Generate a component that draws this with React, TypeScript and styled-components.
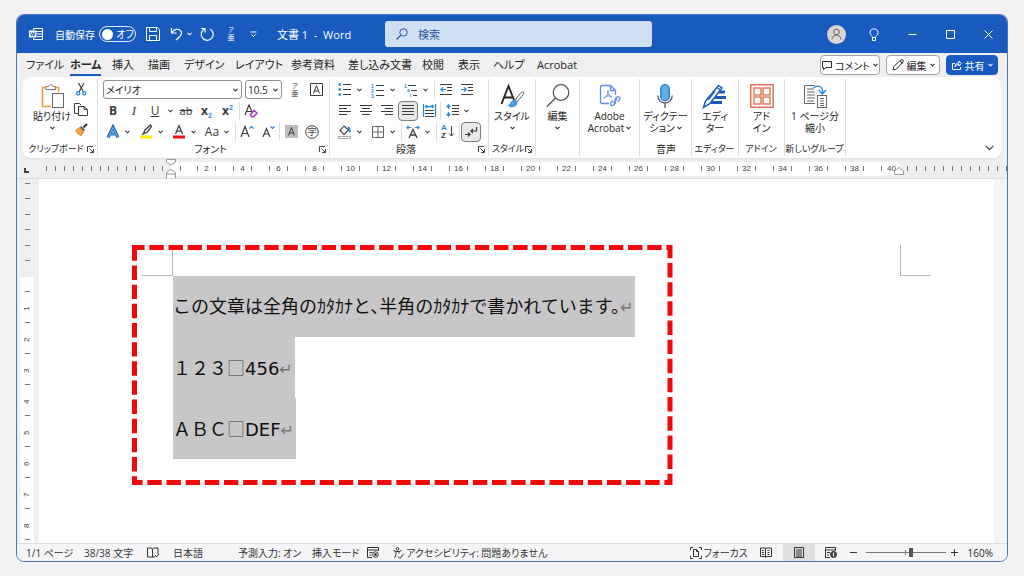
import React from "react";
import styled, { createGlobalStyle, css } from "styled-components";

const BLUE = "#185abd";
const INK = "#3b3b3b";
const ACCENT = "#2b88d8";

const Global = createGlobalStyle`
  *, *::before, *::after { box-sizing: border-box; }
  body { margin: 0; background: #f1f1f2; }
  body, button, input, select {
    font-family: "Open Sans", "Noto Sans CJK JP", sans-serif;
    font-feature-settings: "palt";
    color: #262626;
  }
  button { border: 0; padding: 0; margin: 0; background: none; }
  svg { display: block; flex: none; overflow: visible; }
  p { margin: 0; }
`;

/* ---------- window frame ---------- */

const Desktop = styled.div`
  min-height: 100vh;
  display: flex;
  padding: 14px 16px 14px 16px;
`;

const Window = styled.div`
  flex: 1;
  min-width: 0;
  display: flex;
  flex-direction: column;
  overflow: hidden;
  border: 1px solid #4a76bd;
  border-radius: 8px;
  background: #efefef;
`;

/* ---------- title bar ---------- */

const TitleBar = styled.header`
  display: grid;
  grid-template-columns: 368fr 267fr 355fr;
  align-items: center;
  height: 38px;
  background: ${BLUE};
  color: #fff;
`;

const TitleLeft = styled.div`
  display: flex;
  align-items: center;
  padding-left: 12px;
  font-size: 10px;
  white-space: nowrap;
`;

const AutoSave = styled.label`
  display: flex;
  align-items: center;
  gap: 4px;
  margin: 0 10px 0 12px;
`;

const Switch = styled.span`
  display: grid;
  grid-template-columns: 15px 1fr;
  align-items: center;
  width: 37px;
  height: 16px;
  border: 1px solid #e6edf8;
  border-radius: 8px;
  text-align: center;
  line-height: 14px;
`;

const SwitchInput = styled.input`
  appearance: none;
  width: 11px;
  height: 11px;
  margin: 0 2px;
  border-radius: 50%;
  background: #fff;
`;

const TitleButton = styled.button<{ $w?: number; $after?: number }>`
  display: grid;
  place-items: center;
  width: ${(p) => p.$w ?? 14}px;
  height: 20px;
  margin-right: ${(p) => p.$after ?? 0}px;
  color: #fff;
`;

const DocName = styled.span`
  font-size: 11px;
`;

const Search = styled.label`
  display: flex;
  align-items: center;
  gap: 10px;
  height: 26px;
  padding: 0 11px;
  border-radius: 3px;
  background: #d0def2;
  color: #2b579a;
`;

const SearchInput = styled.input`
  flex: 1;
  min-width: 0;
  border: 0;
  padding: 0;
  background: transparent;
  font-size: 11px;
  &::placeholder { color: #2b579a; opacity: 1; }
`;

const TitleRight = styled.div`
  display: flex;
  justify-content: flex-end;
  align-items: center;
`;

const WindowButton = styled(TitleButton)`
  width: 38px;
  height: 38px;
`;

const Avatar = styled.span`
  display: grid;
  place-items: center;
  width: 19px;
  height: 19px;
  border-radius: 50%;
  background: #d9d5d3;
  color: #6e625e;
`;

/* ---------- ribbon tabs ---------- */

const TabRow = styled.nav`
  display: flex;
  align-items: center;
  height: 24px;
  padding: 0 9px;
`;

const Tab = styled.button<{ $w: number; $active?: boolean }>`
  display: flex;
  align-items: center;
  width: ${(p) => p.$w}px;
  height: 24px;
  font-size: 11px;
  line-height: 18px;
  white-space: nowrap;
  font-weight: ${(p) => (p.$active ? 700 : 400)};
  span {
    padding-top: 2px;
    border-bottom: 2px solid ${(p) => (p.$active ? BLUE : "transparent")};
  }
`;

const TabActions = styled.div`
  display: flex;
  gap: 6px;
  margin-left: auto;
`;

const ActionButton = styled.button<{ $w: number; $primary?: boolean }>`
  display: flex;
  align-items: center;
  justify-content: center;
  gap: 3px;
  width: ${(p) => p.$w}px;
  height: 20px;
  border: 1px solid ${(p) => (p.$primary ? BLUE : "#a5a5a5")};
  border-radius: 4px;
  background: ${(p) => (p.$primary ? BLUE : "#fff")};
  color: ${(p) => (p.$primary ? "#fff" : "#262626")};
  font-size: 10px;
  white-space: nowrap;
`;

/* ---------- ribbon ---------- */

const Ribbon = styled.section`
  display: flex;
  margin: 0 6px 1px;
  height: 81px;
  padding: 2px 0;
  border-radius: 8px;
  background: #fff;
  box-shadow: 0 1px 2px #dcdcdc;
`;

const Group = styled.div<{ $w: number }>`
  display: flex;
  flex-direction: column;
  flex: 0 1 auto;
  width: ${(p) => p.$w}px;
  border-right: 1px solid #dedede;
`;

const GroupBody = styled.div<{ $pad?: number }>`
  flex: 1;
  display: flex;
  justify-content: center;
  padding-left: ${(p) => p.$pad ?? 0}px;
`;

const GroupFooter = styled.div`
  display: flex;
  align-items: center;
  height: 14px;
  padding-right: 3px;
  font-size: 10px;
  line-height: 14px;
  white-space: nowrap;
`;

const GroupName = styled.span<{ $small?: boolean }>`
  flex: 1;
  display: flex;
  justify-content: center;
  min-width: 0;
  padding-left: ${(p) => (p.$small ? 2 : 4)}px;
  font-size: ${(p) => (p.$small ? 9 : 10)}px;
`;

const Rows = styled.div`
  flex: 1;
  display: flex;
  flex-direction: column;
`;

const Row = styled.div`
  display: flex;
  align-items: center;
  gap: 1px;
  height: 21px;
`;

const Tool = styled.button<{ $active?: boolean }>`
  display: grid;
  place-items: center;
  width: 20px;
  height: 20px;
  color: ${INK};
  font-size: 12px;
  line-height: 16px;
  ${(p) =>
    p.$active &&
    css`
      border: 1px solid #7d7d7d;
      border-radius: 4px;
      background: #e8e8e8;
    `}
`;

const ItalicLetter = styled.i`
  font-family: "Liberation Serif", serif;
  font-size: 13px;
`;

const SmallLetters = styled.s`
  font-size: 11px;
`;

const DropTool = styled.button`
  display: flex;
  align-items: center;
  justify-content: center;
  width: 9px;
  height: 20px;
  color: ${INK};
`;

const Split = styled.span`
  display: flex;
  align-items: center;
  width: 32px;
`;

const Divider = styled.span`
  width: 1px;
  height: 18px;
  background: #dedede;
`;

const Combo = styled.label<{ $w: number }>`
  display: flex;
  align-items: center;
  width: ${(p) => p.$w}px;
  height: 19px;
  margin-right: 2px;
  padding-right: 3px;
  border: 1px solid #8f8f8f;
  border-radius: 3px;
`;

const ComboSelect = styled.select`
  appearance: none;
  flex: 1;
  min-width: 0;
  border: 0;
  padding: 0 0 0 2px;
  background: transparent;
  font-size: 10px;
`;

const Big = styled.button`
  display: flex;
  flex-direction: column;
  align-items: center;
  padding-top: 3px;
  font-size: 10px;
  line-height: 12px;
  white-space: nowrap;
`;

const BigIcon = styled.span`
  display: grid;
  place-items: center;
  height: 28px;
`;

const BigLine = styled.span`
  display: flex;
  align-items: center;
  gap: 2px;
  min-height: 12px;
`;

const Stack = styled.div`
  display: flex;
  flex-direction: column;
`;

const Collapse = styled.button`
  align-self: flex-end;
  margin: 0 7px 5px auto;
  color: ${INK};
`;

/* ---------- rulers ---------- */

const Ruler = styled.div`
  display: flex;
  align-items: center;
  height: 20px;
  border-bottom: 1px solid #dcdcdc;
  overflow: hidden;
`;

const RulerCorner = styled.span`
  width: 5px;
  height: 5px;
  margin: 3px 9px 0 7px;
  border-left: 2px solid #444;
  border-bottom: 2px solid #444;
`;

const RulerMargin = styled.div`
  display: flex;
  flex: none;
  align-items: center;
  justify-content: space-between;
  width: 133px;
  padding: 0 8px 0 8px;
`;

const RulerSpace = styled.div`
  position: relative;
  display: flex;
  flex: none;
  align-items: center;
  height: 14px;
  width: 728px;
  padding-left: 9px;
  background: #fff;
`;

const RulerRest = styled.div`
  display: flex;
  align-items: center;
  gap: 8px;
  padding-left: 8px;
`;

const Tick = styled.span`
  flex: none;
  width: 1px;
  height: 5px;
  background: #777;
`;

const FirstTick = styled(Tick)`
  margin-right: 8px;
`;

const RulerCell = styled.span<{ $last?: boolean }>`
  display: flex;
  flex: none;
  align-items: center;
  justify-content: space-between;
  width: ${(p) => (p.$last ? 23 : 36)}px;
  padding: 0 ${(p) => (p.$last ? 0 : 9)}px 0 8px;
  font: 8px/10px "Liberation Sans", sans-serif;
  color: #444;
`;

const IndentMark = styled.span<{ $end?: boolean }>`
  position: absolute;
  top: ${(p) => (p.$end ? 4 : -3)}px;
  ${(p) => (p.$end ? "right: -5px;" : "left: -5px;")}
`;

const Workspace = styled.main`
  flex: 1;
  display: flex;
  min-height: 0;
`;

const SideRuler = styled.div`
  contain: size;
  display: flex;
  flex-direction: column;
  width: 14px;
  margin: 0 5px 0 3px;
  overflow: hidden;
  background: #fff;
`;

const SideMargin = styled.div`
  display: flex;
  flex: none;
  flex-direction: column;
  align-items: center;
  justify-content: space-between;
  height: 98px;
  padding: 4px 0 16px;
  background: #efefef;
`;

const SideTick = styled.span`
  width: 5px;
  height: 1px;
  background: #777;
`;

const SideCell = styled.span`
  display: flex;
  flex: none;
  flex-direction: column;
  align-items: center;
  justify-content: space-between;
  height: 31px;
  padding-top: 14px;
  font: 8px/10px "Liberation Sans", sans-serif;
  color: #444;
  b {
    font-weight: 400;
    height: 8px;
    writing-mode: vertical-rl;
    transform: rotate(180deg);
    margin-bottom: -3px;
  }
`;

/* ---------- document ---------- */

const Page = styled.article`
  position: relative;
  flex: 1;
  min-width: 0;
  padding: 66px 0 0 103px;
  background: #fff;
`;

const ScrollGutter = styled.div`
  width: 13px;
  background: #f3f3f3;
`;

const CropRow = styled.div`
  display: flex;
  gap: 727px;
`;

const CropMark = styled.span<{ $right?: boolean }>`
  flex: none;
  width: 31px;
  height: 31px;
  border-bottom: 1px solid #b4b8b6;
  ${(p) => (p.$right ? "border-left" : "border-right")}: 1px solid #b4b8b6;
`;

const Lines = styled.div`
  display: flex;
  flex-direction: column;
  align-items: flex-start;
  padding-left: 31px;
`;

const Paragraph = styled.p`
  padding-right: 2px;
  background: #c8c6c8;
  color: #111;
  font-family: "DejaVu Sans", "Noto Sans CJK JP", sans-serif;
  font-feature-settings: "halt";
  font-size: 18px;
  line-height: 61px;
  height: 61px;
  white-space: nowrap;
`;

const Mark = styled.span`
  color: #777;
  font-size: 16px;
`;

const SpaceMark = styled.span`
  color: #666;
  font-family: "Noto Sans CJK JP", sans-serif;
`;

const Callout = styled.svg`
  position: absolute;
  left: 93px;
  top: 66px;
`;

/* ---------- status bar ---------- */

const StatusBar = styled.footer`
  display: flex;
  align-items: center;
  height: 18px;
  padding: 0 14px 0 9px;
  border-top: 1px solid #dcdcdc;
  background: #f5f5f8;
  font-size: 10px;
  line-height: 16px;
  white-space: nowrap;
`;

const StatusItem = styled.button<{ $w?: number; $active?: boolean }>`
  display: flex;
  align-items: center;
  gap: 2px;
  height: 17px;
  ${(p) => p.$w && `width: ${p.$w}px;`}
  color: #333;
  font-size: 10px;
  ${(p) => p.$active && "background: #dedee1;"}
`;

const ViewItem = styled(StatusItem)`
  justify-content: center;
`;

const StatusRight = styled.div`
  display: flex;
  align-items: center;
  margin-left: auto;
`;

const ZoomSlider = styled.input`
  appearance: none;
  width: 80px;
  height: 10px;
  margin: 0 5px;
  background:
    linear-gradient(#777, #777) center / 1px 5px no-repeat,
    linear-gradient(#777, #777) center / 100% 1px no-repeat;
  &::-webkit-slider-thumb {
    appearance: none;
    width: 4px;
    height: 9px;
    background: #555;
  }
`;

const ZoomValue = styled.span`
  margin-left: 10px;
`;

/* ---------- icons ---------- */

type IconProps = { w: number; h?: number; children: React.ReactNode };
const Icon = ({ w, h = w, children }: IconProps) => (
  <svg width={w} height={h} viewBox={`0 0 ${w} ${h}`} fill="none" stroke="currentColor" strokeWidth="1" aria-hidden="true">
    {children}
  </svg>
);

const Chevron = () => (
  <Icon w={5} h={4}><path d="M.5 .8 2.5 2.8 4.5 .8" strokeWidth="1.1" /></Icon>
);

const Launcher = () => (
  <Icon w={7}><path d="M.5 6V.5H6M2.5 2.5 6 6M6.5 3v3.5H3" stroke="#444" /></Icon>
);

const WordLogo = () => (
  <Icon w={14}>
    <path d="M4.5 3V1.500h9v11h-9V11M6 4.500h7M8 7h5M8 9.500h5" />
    <rect x="0" y="3.500" width="7.500" height="7" fill="#fff" stroke="none" />
    <path d="M1.500 5.200 2.500 9 3.700 5.500 4.900 9 6 5.200" stroke={BLUE} />
  </Icon>
);

const RubyIcon = ({ color = INK }: { color?: string }) => (
  <svg width="14" height="16" viewBox="0 0 14 16" fill={color} aria-hidden="true">
    <text x="7" y="6" fontSize="6" textAnchor="middle">ア</text>
    <text x="7" y="14" fontSize="7" textAnchor="middle">亜</text>
  </svg>
);

const alignments: Record<string, [number, number][]> = {
  left: [[0, 12], [0, 8], [0, 12], [0, 8]],
  center: [[0, 12], [2, 10], [0, 12], [2, 10]],
  right: [[0, 12], [4, 12], [0, 12], [4, 12]],
  full: [[0, 12], [0, 12], [0, 12], [0, 12]],
};

const AlignIcon = ({ kind }: { kind: string }) => (
  <Icon w={12} h={11}>
    {alignments[kind].map(([a, b], i) => <path key={i} d={`M${a} ${i * 3 + 0.5}H${b}`} />)}
  </Icon>
);

const BulletsIcon = () => (
  <Icon w={14} h={13}>
    {[1.5, 6.5, 11.5].map((y) => (
      <React.Fragment key={y}>
        <rect x="0.500" y={y - 1.2} width="2.400" height="2.400" fill={ACCENT} stroke="none" />
        <path d={`M5 ${y}H13`} />
      </React.Fragment>
    ))}
  </Icon>
);

const NumberingIcon = () => (
  <svg width="14" height="14" viewBox="0 0 14 14" aria-hidden="true">
    {[1, 2, 3].map((n) => (
      <React.Fragment key={n}>
        <text x="0" y={n * 5 - 0.5} fontFamily="Liberation Sans" fontSize="5" fontWeight="700" fill={ACCENT}>{n}</text>
        <path d={`M5 ${n * 5 - 2.5}H13`} stroke={INK} />
      </React.Fragment>
    ))}
  </svg>
);

const MultiLevelIcon = () => (
  <svg width="14" height="14" viewBox="0 0 14 14" aria-hidden="true">
    <g fill={ACCENT} fontFamily="Liberation Sans" fontSize="5" fontWeight="700">
      <text x="0" y="4.500">1</text>
      <text x="3" y="9">a</text>
      <text x="6" y="14">i</text>
    </g>
    <path d="M4 2.500h8M7 7.500h6M9 12.500h4" stroke={INK} />
  </svg>
);

const IndentIcon = ({ out }: { out?: boolean }) => (
  <Icon w={13} h={11}>
    <path d="M0 .5h12M7 3.500h5M7 6.500h5M0 10.500h12" />
    <path d={out ? "M6 5.500H.8M3 3.300.8 5.500 3 7.700" : "M0 5.500h5.200M3 3.300 5.200 5.500 3 7.700"} stroke={ACCENT} strokeWidth="1.200" />
  </Icon>
);

const DistributeIcon = () => (
  <Icon w={13} h={13}>
    <path d="M.5 0v13M12.500 0v13M2.500 2.500h8M4 1 2.500 2.500 4 4M9 1l1.500 1.500L9 4" stroke={ACCENT} strokeWidth="1.300" />
    <path d="M2 6.500h9M2 9.500h9M2 12.500h9" />
  </Icon>
);

const LineSpacingIcon = () => (
  <Icon w={13} h={13}>
    <path d="M2.500 1v4M.7 3 2.500 1l1.800 2M2.500 8v4M.7 10l1.800 2 1.800-2" stroke={ACCENT} strokeWidth="1.400" />
    <path d="M6 1.500h7M6 4.500h7M6 7.500h7M6 10.500h7" />
  </Icon>
);

const ShadingIcon = () => (
  <Icon w={14} h={14}>
    <path d="M6 1 2 5.500l4 4L10.500 5z" strokeWidth="1.100" />
    <path d="M9.500 2.500c2 0 2.500 2 2.200 5" stroke={ACCENT} strokeWidth="1.800" />
    <rect x=".5" y="11.500" width="12" height="2" stroke="#aaa" />
  </Icon>
);

const BordersIcon = () => (
  <Icon w={12}><path d="M.5.5h11v11H.5zM6 .5v11M.5 6h11" stroke="#666" /></Icon>
);

const CharWidthIcon = () => (
  <Icon w={14} h={14}>
    <path d="M3 13 7 4.500 11 13M4.500 10h5" strokeWidth="1.300" />
    <path d="M5 2.500H1M2.500 1 1 2.500 2.500 4M9 2.500h4M11.500 1 13 2.500 11.500 4" stroke={ACCENT} strokeWidth="1.200" />
  </Icon>
);

const SortIcon = () => (
  <svg width="14" height="15" viewBox="0 0 14 15" fill="none" aria-hidden="true">
    <g fontFamily="Liberation Sans" fontSize="8" fontWeight="700">
      <text x="0" y="6" fill={ACCENT}>A</text>
      <text x="0" y="14" fill={INK}>Z</text>
    </g>
    <path d="M10.500 2v10M8 9.500l2.500 2.500L13 9.500" stroke={INK} />
  </svg>
);

const MarksIcon = () => (
  <Icon w={14} h={12}>
    <path d="M12.500 1v4H7M9 3 7 5l2 2M1 8.500h5M4 6.500l2 2-2 2" strokeWidth="1.200" />
  </Icon>
);

const CutIcon = () => (
  <Icon w={11} h={13}>
    <path d="M2.500 0 7.500 9M8 0 3 9" strokeWidth="1.200" />
    <circle cx="2.200" cy="10.300" r="1.600" stroke={ACCENT} strokeWidth="1.300" />
    <circle cx="8.300" cy="10.300" r="1.600" stroke={ACCENT} strokeWidth="1.300" />
  </Icon>
);

const CopyIcon = () => (
  <Icon w={14} h={13}>
    <path d="M4 10.500H.5V.5h5L7 2M4.500 3.500H10L13.500 6.500v6h-9zM10 3.500v3h3" />
  </Icon>
);

const BrushIcon = () => (
  <Icon w={13} h={13}>
    <path d="M12 1 8.500 4.500" strokeWidth="2.200" />
    <path d="M5.500 3.500 9.500 7.500" stroke={INK} strokeWidth="1.400" />
    <path d="M4.500 4.500 8.500 8.500 6 12.500C3.500 11.500 1.500 9.500.8 7.500z" fill="#f3a44c" stroke="#d9762b" />
  </Icon>
);

const PasteIcon = () => (
  <Icon w={23} h={25}>
    <path d="M17.500 8V3.500H1.500v19H10" stroke="#eb9a3c" strokeWidth="1.600" />
    <path d="M5 5.500V2.500h2.500C8 0 11.500 0 12 2.500h2.500v3z" fill="#fff" stroke="#777" />
    <rect x="11.500" y="9.500" width="11" height="14" fill="#fff" stroke="#666" />
  </Icon>
);

const StylesIcon = () => (
  <Icon w={25} h={25}>
    <path d="M1.500 20 8.500 2 14 16M4 13.500h8" strokeWidth="1.900" />
    <path d="M23.500 8c-1-1-2.500 0-8.500 8.500l1.800 1.500C22 12 24.500 9.500 23.500 8z" fill="#fff" stroke="#555" />
    <path d="M14.500 16.500c-4 0-3.500 4-6 5 2.500 2 8.500 1.500 8.500-2.700z" fill="#4aa0e6" stroke={ACCENT} />
  </Icon>
);

const FindIcon = () => (
  <Icon w={24} h={24}>
    <circle cx="15" cy="8.500" r="7.800" stroke="#555" strokeWidth="1.200" />
    <path d="M9.500 14 .8 22.800" stroke="#555" strokeWidth="1.300" />
  </Icon>
);

const AcrobatIcon = () => (
  <Icon w={22} h={24}>
    <path d="M10 19.500H3A1.500 1.500 0 0 1 1.500 18V3A1.500 1.500 0 0 1 3 1.500h8.500l5 5V11M11.500 1.500v5h5" stroke="#5b8ce8" strokeWidth="1.300" />
    <path d="M9 6.500c-1 2 .5 5 4 6.500M9 6.500c.8 2-.8 5.500-4 8 1.500-2.500 5-3.500 8-1.500" stroke="#5b8ce8" />
    <path d="m15.500 16 2-2.500c2-2 4.500.3 3 2.200l-1.800 2M17 18l-2 2.700c-1.800 2-4.500 0-3-2.200l1.800-2M14.500 19l3.500-4" stroke="#5b8ce8" strokeWidth="1.300" />
  </Icon>
);

const MicIcon = () => (
  <Icon w={16} h={24}>
    <rect x="3.700" y=".7" width="8.600" height="16" rx="4.300" fill="#63aee9" stroke="#2a78c0" strokeWidth="1.300" />
    <path d="M.8 11.500c0 10 14.400 10 14.400 0M8 19.500V24" stroke="#555" strokeWidth="1.300" />
  </Icon>
);

const EditorIcon = () => (
  <Icon w={25} h={25}>
    <path d="M14 8h9M13 13.500h11M9 18.500h11" stroke={BLUE} strokeWidth="3.200" />
    <path d="M16.500 1.500 20 4 7.500 20 1.500 23.500 3.500 17z" fill="#fff" stroke={BLUE} strokeWidth="1.500" />
    <path d="m15 3.500 3.500 2.500M13 7 6 16" stroke={BLUE} strokeWidth="1.300" />
  </Icon>
);

const AddinIcon = () => (
  <Icon w={24} h={24}>
    <rect x=".8" y=".8" width="22.400" height="22.400" stroke="#e0694a" strokeWidth="1.400" />
    {[[4, 4], [13, 4], [4, 13], [13, 13]].map(([x, y]) => (
      <rect key={`${x}-${y}`} x={x} y={y} width="7" height="7" stroke="#e0694a" strokeWidth="1.300" />
    ))}
  </Icon>
);

const ShrinkIcon = () => (
  <Icon w={25} h={24}>
    <path d="M12 1.500H1.500v18H12M4 5h7M4 8h8M4 11h8M4 14h8M4 17h7" stroke="#666" />
    <rect x="14.500" y="11.500" width="9" height="12" stroke="#666" />
    <path d="M17 14.500h4M17 17h4M17 19.500h4M17 21.500h4" stroke="#666" />
    <path d="M10.500 4c5-4 10-1 9 5M15.500 6l4 4L23 6" stroke={ACCENT} strokeWidth="1.400" />
  </Icon>
);

const TextEffectIcon = () => (
  <Icon w={14}>
    <path d="M2 12.500 7 2l5 10.500M4.500 9h5" stroke="#2168b5" strokeWidth="3" />
    <path d="M2.300 12.300 7 2.500l4.700 9.800M4.500 9h5" stroke="#a5d0f5" strokeWidth=".7" />
  </Icon>
);

const HighlightIcon = () => (
  <Icon w={14} h={15}>
    <path d="M11.500 1 6 6l-1.500 3.500L8 8.500 12.500 2.500zM4.500 9.500 3 11" strokeWidth="1.300" />
    <path d="M1 13h12" stroke="#fdf000" strokeWidth="3" />
  </Icon>
);

const FontColorIcon = () => (
  <Icon w={14} h={15}>
    <path d="M3.500 10 7 1.500 10.500 10M4.700 7.200h4.600" strokeWidth="1.200" />
    <path d="M1 13h12" stroke="#e81010" strokeWidth="3" />
  </Icon>
);

const GrowShrinkIcon = ({ up }: { up?: boolean }) => (
  <Icon w={14} h={13}>
    <path d={up ? "M1 12 5 1.500 9 12M2.400 8.500h5.200" : "M2 12 5.500 3.500 9 12M3.300 9h4.400"} strokeWidth="1.200" />
    <path d={up ? "M9.500 3.500 11.500 1.500 13.500 3.500" : "M9.500 1.500 11.500 3.500 13.500 1.500"} stroke={ACCENT} strokeWidth="1.200" />
  </Icon>
);

const ScriptIcon = ({ raised }: { raised?: boolean }) => (
  <svg width="14" height="14" viewBox="0 0 14 14" aria-hidden="true">
    <text x="1" y="11" fontSize="12" fontWeight="700" fill={INK}>x</text>
    <text x="8" y={raised ? 6 : 14} fontFamily="Liberation Sans" fontSize="7" fontWeight="700" fill={ACCENT}>2</text>
  </svg>
);

const ClearIcon = () => (
  <Icon w={14}>
    <path d="M1 11 5 1l4 9M2.500 7.500h5" strokeWidth="1.200" />
    <path d="m6.500 10.500 3.500-4 3 2.500-3.500 4-1.800-.3z" fill="#fff" stroke="#9c3fb5" strokeWidth="1.500" />
  </Icon>
);

const BoxedA = () => (
  <Icon w={13}><path d="M.5.5h12v12H.5zM3.500 10.500l3-8 3 8M4.500 8h4" /></Icon>
);

const ShadedA = () => (
  <Icon w={13}>
    <rect width="13" height="13" fill="#bdbdbd" stroke="none" />
    <path d="m3.500 10.500 3-8 3 8M4.500 8h4" />
  </Icon>
);

const EnclosedIcon = () => (
  <svg width="14" height="14" viewBox="0 0 14 14" aria-hidden="true">
    <circle cx="7" cy="7" r="6.300" fill="none" stroke={INK} />
    <text x="7" y="10.300" fontSize="9" textAnchor="middle" fill={INK}>字</text>
  </svg>
);

const IndentShape = ({ both }: { both?: boolean }) => (
  <svg width="10" height={both ? 20 : 9} viewBox={`0 0 10 ${both ? 20 : 9}`} fill="#fff" stroke="#999" aria-hidden="true">
    {both && <path d="M.5.5h9v2.500L5 6 .5 3z" />}
    {both ? <path d="M.5 19.500v-6L5 10.500l4.500 3v6zM.5 15h9" /> : <path d="M.5 8.500V5L5 1.500 9.500 5v3.500z" />}
  </svg>
);

/* ---------- screen ---------- */

const SplitTool = ({ label, children }: { label: string; children: React.ReactNode }) => (
  <Split>
    <Tool aria-label={label}>{children}</Tool>
    <DropTool aria-label={`${label} オプション`}><Chevron /></DropTool>
  </Split>
);

type BigProps = { icon: React.ReactNode; lines: string[]; drop?: "inline" | "below" };
const BigTool = ({ icon, lines, drop }: BigProps) => (
  <Big>
    <BigIcon>{icon}</BigIcon>
    {lines.map((l, i) => (
      <BigLine key={l}>{l}{drop === "inline" && i === lines.length - 1 && <Chevron />}</BigLine>
    ))}
    {drop === "below" && <BigLine><Chevron /></BigLine>}
  </Big>
);

const tabs: [string, number][] = [
  ["ファイル", 44], ["ホーム", 42], ["挿入", 36], ["描画", 36], ["デザイン", 51], ["レイアウト", 56],
  ["参考資料", 57], ["差し込み文書", 74], ["校閲", 36], ["表示", 35], ["ヘルプ", 44], ["Acrobat", 50],
];

const range = (n: number) => Array.from({ length: n }, (_, i) => i);

export default function App() {
  return (
    <>
      <Global />
      <Desktop>
        <Window>
          <TitleBar>
            <TitleLeft>
              <WordLogo />
              <AutoSave>
                自動保存
                <Switch><SwitchInput type="checkbox" role="switch" />オフ</Switch>
              </AutoSave>
              <TitleButton aria-label="上書き保存" $after={10}>
                <Icon w={14}><path d="M.5.5h11l2 2v11H.5zM3.500.5v4h7v-4M3.500 13.500v-5h7v5" /></Icon>
              </TitleButton>
              <TitleButton aria-label="元に戻す">
                <Icon w={14}><path d="M1.500 1v5h5M1.700 5.800C4.500 2 8 1.500 10 3.200c2.500 2 1.500 4.500 0 6L6 13" strokeWidth="1.200" /></Icon>
              </TitleButton>
              <TitleButton aria-label="元に戻す一覧" $w={10} $after={6}><Chevron /></TitleButton>
              <TitleButton aria-label="繰り返し" $after={10}>
                <Icon w={14}><path d="M1 1.500h4v4M4.800 1.800A6 6 0 1 0 10 2" strokeWidth="1.200" /></Icon>
              </TitleButton>
              <TitleButton aria-label="ルビ" $after={8}><RubyIcon color="#fff" /></TitleButton>
              <TitleButton aria-label="クイック アクセス" $after={17}>
                <Icon w={7} h={7}><path d="M.5 1h6M1.500 3.500l2 2 2-2" /></Icon>
              </TitleButton>
              <DocName>文書 1&nbsp; -&nbsp; Word</DocName>
            </TitleLeft>
            <Search>
              <Icon w={12}><circle cx="7.500" cy="4.500" r="3.700" /><path d="M4.800 7.200.5 11.500" strokeWidth="1.200" /></Icon>
              <SearchInput type="search" placeholder="検索" aria-label="検索" />
            </Search>
            <TitleRight>
              <WindowButton aria-label="アカウント">
                <Avatar><Icon w={11} h={12}><circle cx="5.500" cy="4" r="2.800" /><path d="M1 11.500c.5-6 8.500-6 9 0" /></Icon></Avatar>
              </WindowButton>
              <WindowButton aria-label="ヒント">
                <Icon w={10} h={13}><path d="M3.500 9.500C3.500 8 1 7 1 4.600 1-.4 9-.4 9 4.600 9 7 6.500 8 6.500 9.500zM3.500 9.500v3h3v-3" /></Icon>
              </WindowButton>
              <WindowButton aria-label="最小化"><Icon w={9}><path d="M.5 4.500h8" /></Icon></WindowButton>
              <WindowButton aria-label="最大化"><Icon w={9}><path d="M.5.5h8v8h-8z" /></Icon></WindowButton>
              <WindowButton aria-label="閉じる"><Icon w={9}><path d="m.5.5 8 8M8.500.5l-8 8" /></Icon></WindowButton>
            </TitleRight>
          </TitleBar>

          <TabRow>
            {tabs.map(([name, w]) => (
              <Tab key={name} $w={w} $active={name === "ホーム"}><span>{name}</span></Tab>
            ))}
            <TabActions>
              <ActionButton $w={60}>
                <Icon w={10} h={9}><path d="M.5.5h9v6H4L1.500 8.500v-2h-1z" /></Icon>コメント<Chevron />
              </ActionButton>
              <ActionButton $w={54}>
                <Icon w={12}><path d="m1 11 .8-3.500L9 .8C10.500 0 12 1.500 11 3L4.500 10zM8 2l2.500 2.500" /></Icon>編集<Chevron />
              </ActionButton>
              <ActionButton $w={52} $primary>
                <Icon w={10}><path d="M3 3.500H.5v6h8V7M3 7c0-3 2-4 4-4V1l2.500 2.500L7 6V4.500C5.500 4.500 4 5 3 7z" /></Icon>共有<Chevron />
              </ActionButton>
            </TabActions>
          </TabRow>

          <Ribbon>
            <Group $w={75}>
              <GroupBody $pad={4}>
                <BigTool icon={<PasteIcon />} lines={["貼り付け"]} drop="below" />
                <Stack>
                  <Tool aria-label="切り取り"><CutIcon /></Tool>
                  <Tool aria-label="コピー"><CopyIcon /></Tool>
                  <Tool aria-label="書式のコピー"><BrushIcon /></Tool>
                </Stack>
              </GroupBody>
              <GroupFooter><GroupName $small>クリップボード</GroupName><Launcher /></GroupFooter>
            </Group>

            <Group $w={232}>
              <GroupBody $pad={5}>
                <Rows>
                  <Row>
                    <Combo $w={139}>
                      <ComboSelect aria-label="フォント"><option>メイリオ</option></ComboSelect><Chevron />
                    </Combo>
                    <Combo $w={37}>
                      <ComboSelect aria-label="フォント サイズ"><option>10.5</option></ComboSelect><Chevron />
                    </Combo>
                    <Tool aria-label="ルビ"><RubyIcon /></Tool>
                    <Tool aria-label="囲み線"><BoxedA /></Tool>
                  </Row>
                  <Row>
                    <Tool><b>B</b></Tool>
                    <Tool><ItalicLetter>I</ItalicLetter></Tool>
                    <Tool><u>U</u></Tool>
                    <DropTool aria-label="下線の種類"><Chevron /></DropTool>
                    <Tool><SmallLetters>ab</SmallLetters></Tool>
                    <Tool aria-label="下付き"><ScriptIcon /></Tool>
                    <Tool aria-label="上付き"><ScriptIcon raised /></Tool>
                    <Divider />
                    <Tool aria-label="書式のクリア"><ClearIcon /></Tool>
                  </Row>
                  <Row>
                    <SplitTool label="文字の効果"><TextEffectIcon /></SplitTool>
                    <SplitTool label="蛍光ペン"><HighlightIcon /></SplitTool>
                    <SplitTool label="フォントの色"><FontColorIcon /></SplitTool>
                    <SplitTool label="文字種の変換">Aa</SplitTool>
                    <Divider />
                    <Tool aria-label="拡大"><GrowShrinkIcon up /></Tool>
                    <Tool aria-label="縮小"><GrowShrinkIcon /></Tool>
                    <Divider />
                    <Tool aria-label="文字の網かけ"><ShadedA /></Tool>
                    <Tool aria-label="囲い文字"><EnclosedIcon /></Tool>
                  </Row>
                </Rows>
              </GroupBody>
              <GroupFooter><GroupName>フォント</GroupName><Launcher /></GroupFooter>
            </Group>

            <Group $w={159}>
              <GroupBody $pad={5}>
                <Rows>
                  <Row>
                    <SplitTool label="箇条書き"><BulletsIcon /></SplitTool>
                    <SplitTool label="段落番号"><NumberingIcon /></SplitTool>
                    <SplitTool label="アウトライン"><MultiLevelIcon /></SplitTool>
                    <Divider />
                    <Tool aria-label="インデントを減らす"><IndentIcon out /></Tool>
                    <Tool aria-label="インデントを増やす"><IndentIcon /></Tool>
                  </Row>
                  <Row>
                    <Tool aria-label="左揃え"><AlignIcon kind="left" /></Tool>
                    <Tool aria-label="中央揃え"><AlignIcon kind="center" /></Tool>
                    <Tool aria-label="右揃え"><AlignIcon kind="right" /></Tool>
                    <Tool aria-label="両端揃え" $active><AlignIcon kind="full" /></Tool>
                    <Tool aria-label="均等割り付け"><DistributeIcon /></Tool>
                    <Divider />
                    <SplitTool label="行間"><LineSpacingIcon /></SplitTool>
                  </Row>
                  <Row>
                    <SplitTool label="塗りつぶし"><ShadingIcon /></SplitTool>
                    <SplitTool label="罫線"><BordersIcon /></SplitTool>
                    <Divider />
                    <SplitTool label="拡張書式"><CharWidthIcon /></SplitTool>
                    <Divider />
                    <Tool aria-label="並べ替え"><SortIcon /></Tool>
                    <Divider />
                    <Tool aria-label="編集記号の表示" $active><MarksIcon /></Tool>
                  </Row>
                </Rows>
              </GroupBody>
              <GroupFooter><GroupName>段落</GroupName><Launcher /></GroupFooter>
            </Group>

            <Group $w={47}>
              <GroupBody><BigTool icon={<StylesIcon />} lines={["スタイル"]} drop="below" /></GroupBody>
              <GroupFooter><GroupName $small>スタイル</GroupName><Launcher /></GroupFooter>
            </Group>
            <Group $w={44}>
              <GroupBody><BigTool icon={<FindIcon />} lines={["編集"]} drop="below" /></GroupBody>
            </Group>
            <Group $w={60}>
              <GroupBody><BigTool icon={<AcrobatIcon />} lines={["Adobe", "Acrobat"]} drop="inline" /></GroupBody>
              <GroupFooter />
            </Group>
            <Group $w={52}>
              <GroupBody><BigTool icon={<MicIcon />} lines={["ディクテー", "ション"]} drop="inline" /></GroupBody>
              <GroupFooter><GroupName>音声</GroupName></GroupFooter>
            </Group>
            <Group $w={47}>
              <GroupBody><BigTool icon={<EditorIcon />} lines={["エディ", "ター"]} /></GroupBody>
              <GroupFooter><GroupName $small>エディター</GroupName></GroupFooter>
            </Group>
            <Group $w={46}>
              <GroupBody><BigTool icon={<AddinIcon />} lines={["アド", "イン"]} /></GroupBody>
              <GroupFooter><GroupName $small>アドイン</GroupName></GroupFooter>
            </Group>
            <Group $w={61}>
              <GroupBody><BigTool icon={<ShrinkIcon />} lines={["1 ページ分", "縮小"]} /></GroupBody>
              <GroupFooter><GroupName $small>新しいグループ</GroupName></GroupFooter>
            </Group>
            <Collapse aria-label="リボンを折りたたむ">
              <Icon w={9} h={6}><path d="m.7.8 3.800 3.800L8.300.8" strokeWidth="1.200" /></Icon>
            </Collapse>
          </Ribbon>

          <Ruler>
            <RulerCorner />
            <RulerMargin>{range(14).map((i) => <Tick key={i} />)}</RulerMargin>
            <RulerSpace>
              <FirstTick />
              {range(20).map((i) => (
                <RulerCell key={i} $last={i === 19}><Tick />{i * 2 + 2}{i < 19 && <Tick />}</RulerCell>
              ))}
              <IndentMark><IndentShape both /></IndentMark>
              <IndentMark $end><IndentShape /></IndentMark>
            </RulerSpace>
            <RulerRest>{range(12).map((i) => <Tick key={i} />)}</RulerRest>
          </Ruler>

          <Workspace>
            <SideRuler>
              <SideMargin>{range(6).map((i) => <SideTick key={i} />)}</SideMargin>
              {range(8).map((i) => (
                <SideCell key={i}><SideTick /><b>{i + 1}</b></SideCell>
              ))}
              <SideCell><SideTick /></SideCell>
            </SideRuler>
            <Page>
              <CropRow><CropMark /><CropMark $right /></CropRow>
              <Lines>
                <Paragraph>この文章は全角のｶﾀｶﾅと、半角のｶﾀｶﾅで書かれています。<Mark>↵</Mark></Paragraph>
                <Paragraph>１２３<SpaceMark>□</SpaceMark>456<Mark>↵</Mark></Paragraph>
                <Paragraph>ＡＢＣ<SpaceMark>□</SpaceMark>DEF<Mark>↵</Mark></Paragraph>
              </Lines>
              <Callout width="541" height="240" viewBox="0 0 541 240" fill="none" aria-hidden="true">
                <rect x="2.500" y="2.500" width="535.500" height="235" stroke="#f20808" strokeWidth="5" strokeDasharray="14.400 4.750" strokeDashoffset="4.300" />
              </Callout>
            </Page>
            <ScrollGutter />
          </Workspace>

          <StatusBar>
            <StatusItem $w={58}>1/1 ページ</StatusItem>
            <StatusItem $w={63}>38/38 文字</StatusItem>
            <StatusItem $w={26} aria-label="文章校正">
              <Icon w={12} h={11}><path d="M5.500 2v8H.5V1h3.500zM5.500 2 7 1h4v6M5.500 10H8M8 8l1.500 2L12 7" /></Icon>
            </StatusItem>
            <StatusItem $w={65}>日本語</StatusItem>
            <StatusItem $w={74}>予測入力: オン</StatusItem>
            <StatusItem $w={55}>挿入モード</StatusItem>
            <StatusItem $w={26} aria-label="マクロの記録">
              <Icon w={12} h={11}><path d="M5 10.500H.5V.5h11V4M.5 3h11M2.500 5.500h3M2.500 8h2" /><circle cx="8.500" cy="7.500" r="2.800" /><circle cx="8.500" cy="7.500" r="1" fill="currentColor" /></Icon>
            </StatusItem>
            <StatusItem>
              <Icon w={11} h={12}><circle cx="4.500" cy="1.800" r="1.300" /><path d="M.5 3.500 3 4.500v3L1.500 11M8.500 3.500 6 4.500v2M3 4.500h3M5 9.500l2 2 3.500-4.500" /></Icon>
              アクセシビリティ: 問題ありません
            </StatusItem>
            <StatusRight>
              <StatusItem $w={60}>
                <Icon w={12}><path d="M.5 3V.5H3M9 .5h2.500V3M.5 9v2.500H3M9 11.500h2.500V9M3.500 2.500h3l2 2v5h-5zM6.500 2.500v2h2" /></Icon>
                フォーカス
              </StatusItem>
              <ViewItem $w={33} aria-label="閲覧モード">
                <Icon w={12} h={11}><path d="M5.500 1.500v9M.5 1h4.500L6 1.500 7 1h4.500v8.500H7l-1 .5-1-.5H.5zM2 3.500h2M2 5.500h2M2 7.500h2M7.500 3.500h2M7.500 5.500h2M7.500 7.500h2" /></Icon>
              </ViewItem>
              <ViewItem $w={32} $active aria-label="印刷レイアウト">
                <Icon w={10} h={11}><path d="M.5.5h9v10h-9zM2 3h6M2 5h6M2 7h6M2 9h6" /></Icon>
              </ViewItem>
              <ViewItem $w={32} aria-label="Web レイアウト">
                <Icon w={12} h={11}><path d="M5 10.500H.5V.5h10V4M.5 3h10M2 5.500h3M2 8h2" /><circle cx="8.500" cy="7.500" r="3" fill="#444" /><path d="M8.500 5.500v4" stroke="#fff" /></Icon>
              </ViewItem>
              <ViewItem $w={14} aria-label="縮小"><Icon w={7}><path d="M0 3.500h7" /></Icon></ViewItem>
              <ZoomSlider type="range" min={0} max={100} defaultValue={57} aria-label="ズーム" />
              <ViewItem $w={7} aria-label="拡大"><Icon w={7}><path d="M0 3.500h7M3.500 0v7" /></Icon></ViewItem>
              <ZoomValue>160%</ZoomValue>
            </StatusRight>
          </StatusBar>
        </Window>
      </Desktop>
    </>
  );
}
